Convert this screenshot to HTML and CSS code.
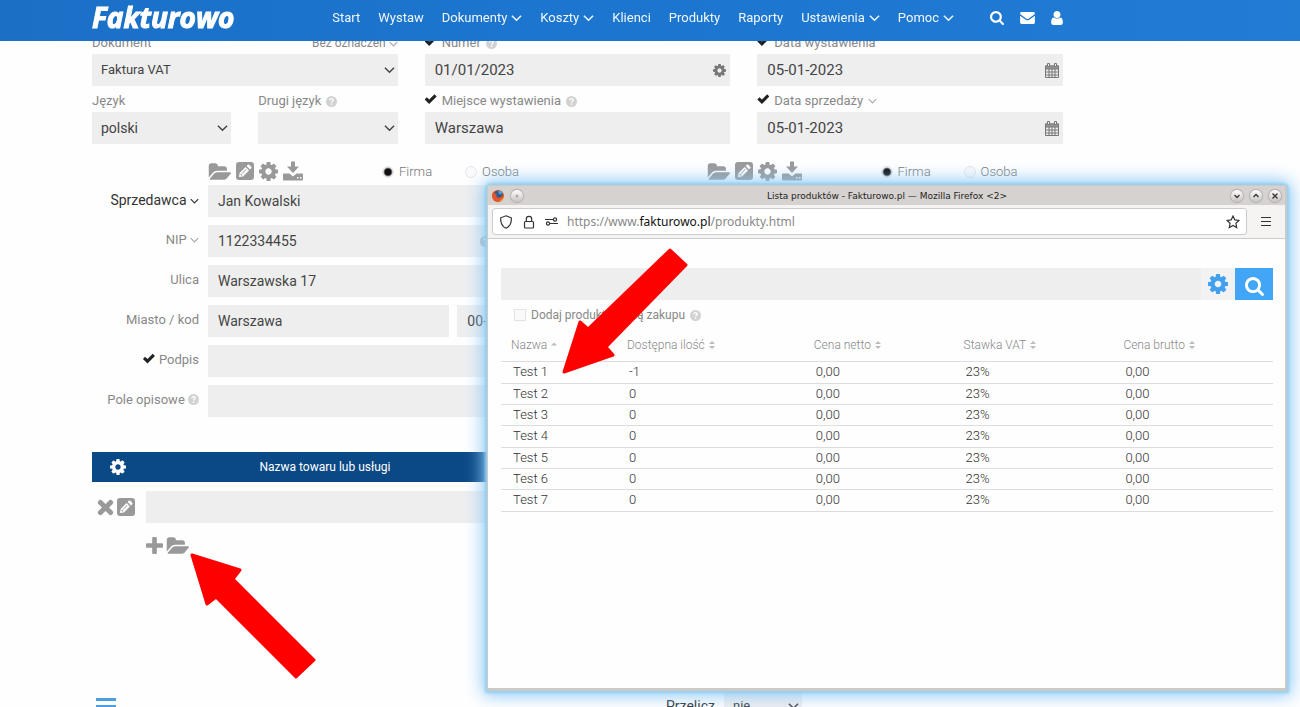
FILE: index.html
```html
<!DOCTYPE html>
<html lang="pl">
<head>
<meta charset="utf-8">
<title>Fakturowo</title>
<link rel="stylesheet" href="styles.css">
</head>
<body>
<svg class="sprite" aria-hidden="true">
  <symbol id="cog" viewBox="128 128 1536 1536"><path d="M1152 896q0-106-75-181t-181-75-181 75-75 181 75 181 181 75 181-75 75-181zm512-109v222q0 12-8 23t-20 13l-185 28q-19 54-39 91 35 50 107 138 10 12 10 25t-9 23q-27 37-99 108t-94 71q-12 0-26-9l-138-108q-44 23-91 38-16 136-29 186-7 28-36 28h-222q-14 0-24.500-8.500t-11.500-21.500l-28-184q-49-16-90-37l-141 107q-10 9-25 9-14 0-25-11-126-114-165-168-7-10-7-23 0-12 8-23 15-21 51-66.500t54-70.500q-27-50-41-99l-183-27q-13-2-21-12.500t-8-23.500v-222q0-12 8-23t19-13l186-28q14-46 39-92-40-57-107-138-10-12-10-24 0-10 9-23 26-36 98.500-107.500t94.500-71.500q13 0 26 10l138 107q44-23 91-38 16-136 29-186 7-28 36-28h222q14 0 24.500 8.500t11.500 21.500l28 184q49 16 90 37l142-107q9-9 24-9 13 0 25 10 129 119 165 170 7 8 7 22 0 12-8 23-15 21-51 66.500t-54 70.500q26 50 41 98l183 28q13 2 21 12.500t8 23.500z"/></symbol>
  <symbol id="folder" viewBox="0 128 1943 1408"><path d="M1943 952q0 31-31 66l-336 396q-43 51-120.500 86.500t-143.500 35.500h-1088q-34 0-60.500-13t-26.500-43q0-31 31-66l336-396q43-51 120.500-86.500t143.500-35.500h1088q34 0 60.500 13t26.500 43zm-343-344v160h-832q-94 0-197 47.500t-164 119.500l-337 396-5 6q0-4-.5-12.500t-.5-12.500v-960q0-92 66-158t158-66h320q92 0 158 66t66 158v32h544q92 0 158 66t66 158z"/></symbol>
  <symbol id="search" viewBox="64 128 1664 1664"><path d="M1216 832q0-185-131.500-316.500t-316.500-131.500-316.500 131.500-131.500 316.500 131.500 316.500 316.500 131.500 316.500-131.500 131.500-316.500zm512 832q0 52-38 90t-90 38q-54 0-90-38l-343-342q-179 124-399 124-143 0-273.500-55.500t-225-150-150-225-55.500-273.500 55.500-273.500 150-225 225-150 273.500-55.500 273.500 55.500 225 150 150 225 55.500 273.500q0 220-124 399l343 343q37 37 37 90z"/></symbol>
  <symbol id="mail" viewBox="0 0 16 13"><path d="M0 2.200v-.7C0 .7.700 0 1.500 0h13c.8 0 1.500.7 1.500 1.500v.7L9.200 7.200c-.8.500-1.600.5-2.400 0z M0 4l6 4.300c1.300.9 2.700.9 4 0L16 4v7.500c0 .8-.7 1.500-1.500 1.500h-13C.700 13 0 12.300 0 11.500z"/></symbol>
  <symbol id="user" viewBox="256 128 1280 1536"><path d="M1536 1399q0 109-62.500 187t-150.500 78h-854q-88 0-150.500-78t-62.500-187q0-85 8.500-160.500t31.500-152 58.500-131 94-89 134.500-34.500q131 128 313 128t313-128q76 0 134.500 34.500t94 89 58.500 131 31.500 152 8.500 160.500zm-256-887q0 159-112.500 271.500t-271.500 112.500-271.500-112.500-112.500-271.500 112.500-271.500 271.500-112.500 271.500 112.500 112.500 271.500z"/></symbol>
  <symbol id="pencil" viewBox="0 0 18 18"><path fill-rule="evenodd" d="M3 0h12a3 3 0 0 1 3 3v12a3 3 0 0 1-3 3H3a3 3 0 0 1-3-3V3a3 3 0 0 1 3-3zM3 15l4-.6L13 8.400 9.600 5 3.600 11zM10.600 4l3.400 3.400 1.200-1.200c.5-.5.5-1 0-1.500l-1.900-1.900c-.5-.5-1-.5-1.500 0zM5 11.500l1.500 1.500-.9.700-1.200-1.200zM6 11l4-4 .5.500-4 4z"/></symbol>
  <symbol id="download" viewBox="0 0 20 19"><path fill-rule="evenodd" d="M8 0h4v5h4l-6 6.500L4 5h4zM1 12h5.500L10 15l3.500-3H19c.6 0 1 .4 1 1v5c0 .6-.4 1-1 1H1c-.6 0-1-.4-1-1v-5c0-.6.400-1 1-1zM14 15.500V17h1.500v-1.500zM17 15.500V17h1.500v-1.500z"/></symbol>
  <symbol id="plus" viewBox="192 128 1408 1408"><path d="M1600 736v192q0 40-28 68t-68 28h-416v416q0 40-28 68t-68 28h-192q-40 0-68-28t-28-68v-416h-416q-40 0-68-28t-28-68v-192q0-40 28-68t68-28h416v-416q0-40 28-68t68-28h192q40 0 68 28t28 68v416h416q40 0 68 28t28 68z"/></symbol>
  <symbol id="cross" viewBox="0 0 15 15"><path d="M3 3l9 9M12 3l-9 9" stroke="currentColor" stroke-width="4.400" stroke-linecap="round"/></symbol>
  <symbol id="calendar" viewBox="0 0 14 15"><path d="M.5 3h13v11.500H.5zM.5 6h13M.5 9h13M.5 12h13M4 6v8.500M7 6v8.500M10 6v8.500" fill="none" stroke="currentColor"/><path d="M0 2.500h14V6H0z" opacity=".75"/><path d="M2.500.5h2v3h-2zM9.500.5h2v3h-2z" fill="#eee" stroke="currentColor"/></symbol>
  <symbol id="chevron" viewBox="0 0 12 8"><path d="M1 1.500l5 5 5-5" fill="none" stroke="currentColor" stroke-width="1.600"/></symbol>
  <symbol id="help" viewBox="0 0 12 12"><circle cx="6" cy="6" r="6"/><path d="M4.200 4.600C4.300 2.300 7.900 2.400 7.800 4.600 7.700 5.700 6.100 5.800 6.100 7.200M6.100 8.300v1.500" fill="none" stroke="#fff" stroke-width="1.500"/></symbol>
  <symbol id="sort" viewBox="0 0 6 8"><path d="M0 3l3-3 3 3zM0 5h6L3 8z"/></symbol>
  <symbol id="sortup" viewBox="0 0 6 8"><path d="M0 4.500l3-3 3 3z"/></symbol>
</svg>

<header class="topbar">
  <a class="logo" href="#">Fakturowo</a>
  <nav class="nav">
    <a href="#">Start</a>
    <a href="#">Wystaw</a>
    <a href="#">Dokumenty <svg class="chev"><use href="#chevron"/></svg></a>
    <a href="#">Koszty <svg class="chev"><use href="#chevron"/></svg></a>
    <a href="#">Klienci</a>
    <a href="#">Produkty</a>
    <a href="#">Raporty</a>
    <a href="#">Ustawienia <svg class="chev"><use href="#chevron"/></svg></a>
    <a href="#">Pomoc <svg class="chev"><use href="#chevron"/></svg></a>
  </nav>
  <div class="tools">
    <a href="#" aria-label="Szukaj"><svg class="i14"><use href="#search"/></svg></a>
    <a href="#" aria-label="Wiadomości"><svg class="mail"><use href="#mail"/></svg></a>
    <a href="#" aria-label="Konto"><svg class="user"><use href="#user"/></svg></a>
  </div>
</header>

<main class="page">
  <section class="doc">
    <div class="field">
      <div class="lab"><label for="dokument">Dokument</label><a class="small" href="#">Bez oznaczeń <svg class="chev thin"><use href="#chevron"/></svg></a></div>
      <div class="sel tight"><select id="dokument"><option>Faktura VAT</option></select><svg class="chev"><use href="#chevron"/></svg></div>
    </div>
    <div class="field">
      <div class="lab"><input type="checkbox" class="tick" id="t1" checked><label for="t1">Numer</label><svg class="help"><use href="#help"/></svg></div>
      <div class="box"><input type="text" aria-label="Numer" value="01/01/2023"><svg class="i13"><use href="#cog"/></svg></div>
    </div>
    <div class="field">
      <div class="lab"><input type="checkbox" class="tick" id="t2" checked><label for="t2">Data wystawienia</label></div>
      <div class="box"><input type="text" aria-label="Data wystawienia" value="05-01-2023"><svg class="cal"><use href="#calendar"/></svg></div>
    </div>
    <div class="pair">
      <div class="field">
        <div class="lab"><label for="jezyk">Język</label></div>
        <div class="sel"><select id="jezyk"><option>polski</option></select><svg class="chev"><use href="#chevron"/></svg></div>
      </div>
      <div class="field">
        <div class="lab"><label for="jezyk2">Drugi język</label><svg class="help"><use href="#help"/></svg></div>
        <div class="sel"><select id="jezyk2"><option></option></select><svg class="chev"><use href="#chevron"/></svg></div>
      </div>
    </div>
    <div class="field">
      <div class="lab"><input type="checkbox" class="tick" id="t3" checked><label for="t3">Miejsce wystawienia</label><svg class="help"><use href="#help"/></svg></div>
      <div class="box"><input type="text" aria-label="Miejsce wystawienia" value="Warszawa"></div>
    </div>
    <div class="field">
      <div class="lab"><input type="checkbox" class="tick" id="t4" checked><label for="t4">Data sprzedaży</label><svg class="chev thin"><use href="#chevron"/></svg></div>
      <div class="box"><input type="text" aria-label="Data sprzedaży" value="05-01-2023"><svg class="cal"><use href="#calendar"/></svg></div>
    </div>
  </section>

  <section class="parties">
    <div class="party">
      <div class="ptools">
        <button aria-label="Otwórz"><svg class="folder"><use href="#folder"/></svg></button>
        <button aria-label="Edytuj"><svg class="i18"><use href="#pencil"/></svg></button>
        <button aria-label="Ustawienia"><svg class="i19"><use href="#cog"/></svg></button>
        <button aria-label="Pobierz"><svg class="i20"><use href="#download"/></svg></button>
        <label class="kind first"><input type="radio" name="s" checked>Firma</label>
        <label class="kind"><input type="radio" name="s">Osoba</label>
      </div>
      <label class="dark" for="s1">Sprzedawca <svg class="chev mini"><use href="#chevron"/></svg></label>
      <div class="box"><input type="text" id="s1" value="Jan Kowalski"></div>
      <label for="s2">NIP <svg class="chev thin"><use href="#chevron"/></svg></label>
      <div class="box short"><input type="text" id="s2" value="1122334455"><svg class="help"><use href="#help"/></svg></div>
      <label for="s3">Ulica</label>
      <div class="box"><input type="text" id="s3" value="Warszawska 17"></div>
      <label for="s4">Miasto / kod</label>
      <div class="city">
        <div class="box"><input type="text" id="s4" value="Warszawa"></div>
        <div class="box"><input type="text" aria-label="Kod" value="00-"></div>
      </div>
      <label for="t5"><input type="checkbox" class="tick" id="t5" checked>Podpis</label>
      <div class="box"><input type="text" aria-label="Podpis"></div>
      <label for="s6">Pole opisowe <svg class="help"><use href="#help"/></svg></label>
      <div class="box"><input type="text" id="s6"></div>
    </div>
    <div class="party">
      <div class="ptools">
        <button aria-label="Otwórz"><svg class="folder"><use href="#folder"/></svg></button>
        <button aria-label="Edytuj"><svg class="i18"><use href="#pencil"/></svg></button>
        <button aria-label="Ustawienia"><svg class="i19"><use href="#cog"/></svg></button>
        <button aria-label="Pobierz"><svg class="i20"><use href="#download"/></svg></button>
        <label class="kind first"><input type="radio" name="b" checked>Firma</label>
        <label class="kind"><input type="radio" name="b">Osoba</label>
      </div>
    </div>
  </section>

  <section class="items">
    <div class="ihead">
      <button aria-label="Kolumny"><svg class="i16"><use href="#cog"/></svg></button>
      <span>Nazwa towaru lub usługi</span>
    </div>
    <div class="irow">
      <div class="iact">
        <button aria-label="Usuń"><svg class="i17"><use href="#cross"/></svg></button>
        <button aria-label="Edytuj"><svg class="i18"><use href="#pencil"/></svg></button>
      </div>
      <div class="box"><input type="text" aria-label="Nazwa towaru lub usługi"></div>
    </div>
    <div class="iadd">
      <button aria-label="Dodaj"><svg class="i17"><use href="#plus"/></svg></button>
      <button aria-label="Lista produktów"><svg class="folder"><use href="#folder"/></svg></button>
    </div>
  </section>

  <section class="bottom">
    <button class="burger" aria-label="Menu"><i></i><i></i><i></i></button>
    <label for="przelicz">Przelicz</label>
    <div class="sel tight"><select id="przelicz"><option>nie</option></select><svg class="chev"><use href="#chevron"/></svg></div>
  </section>
</main>

<section class="window" aria-label="Lista produktów">
  <div class="title">
    <svg class="fox" viewBox="0 0 12 12"><circle cx="6" cy="6" r="6" fill="#d9491e"/><circle cx="6.200" cy="5" r="4.300" fill="#2c5a94"/><path d="M6 1.500c2-1 4-.5 5 1.500-1-.3-1.500.5-2 1.500l-2-.5z" fill="#4fa3d1"/><path d="M.5 3C1 2 1.600 1.500 2.300 1.500L2.600 3.400 5 4 4 5.600 5.200 7.200C7.500 8.600 9.500 7 10.500 5 11 9 9 11.600 6 11.700 2 11.500-.7 7.500.5 3z" fill="#e4572e"/><path d="M8 10.500c2-.8 3.400-2.700 3.500-5 .8 3-.7 5.400-3.500 6z" fill="#f5a623"/></svg>
    <button class="orb" aria-label="Przypnij"><svg class="dot" viewBox="0 0 12 12"><circle cx="6" cy="6" r="1"/></svg></button>
    <h1>Lista produktów - Fakturowo.pl — Mozilla Firefox &lt;2&gt;</h1>
    <button class="orb" aria-label="Minimalizuj"><svg viewBox="0 0 12 12"><path d="M3.500 5L6 7.500 8.500 5"/></svg></button>
    <button class="orb" aria-label="Maksymalizuj"><svg viewBox="0 0 12 12"><path d="M3.500 7L6 4.500 8.500 7"/></svg></button>
    <button class="orb" aria-label="Zamknij"><svg viewBox="0 0 12 12"><path d="M3.500 3.500l5 5M8.500 3.500l-5 5"/></svg></button>
  </div>
  <div class="urlbar">
    <div class="url">
      <svg class="shield" viewBox="0 0 14 14"><path d="M7 .8l5.300 2c.3 5-1 8.500-5.300 10.500C2.700 11.300 1.400 7.800 1.700 2.800z"/></svg>
      <svg class="lock" viewBox="0 0 12 14"><rect x="1.500" y="6.500" width="9" height="6.500" rx="1"/><path d="M3.300 6.500V4a2.700 2.700 0 0 1 5.400 0v2.500"/></svg>
      <svg class="perm" viewBox="0 0 13 9"><path d="M0 2.500h8M5 6.500h8"/><circle cx="10" cy="2.500" r="1.600"/><circle cx="3" cy="6.500" r="1.600"/></svg>
      <span>https://www.<b>fakturowo.pl</b>/produkty.html</span>
      <svg class="star" viewBox="0 0 14 14"><path d="M7 1l1.800 3.900 4.200.5-3.100 2.900.8 4.200L7 10.400l-3.700 2.100.8-4.200L1 5.400l4.200-.5z"/></svg>
    </div>
    <button class="menu" aria-label="Menu"><i></i><i></i><i></i></button>
  </div>
  <div class="view">
    <form class="find">
      <input type="text" aria-label="Szukaj produktu">
      <button type="button" class="conf" aria-label="Ustawienia"><svg class="i20"><use href="#cog"/></svg></button>
      <button type="button" class="go" aria-label="Szukaj"><svg class="i19"><use href="#search"/></svg></button>
    </form>
    <div class="opt"><input type="checkbox" id="cena"><label for="cena">Dodaj produkt z ceną zakupu</label><svg class="help"><use href="#help"/></svg></div>
    <table>
      <thead><tr>
        <th class="c1">Nazwa <svg><use href="#sortup"/></svg></th>
        <th class="c2">Dostępna ilość <svg><use href="#sort"/></svg></th>
        <th class="c3">Cena netto <svg><use href="#sort"/></svg></th>
        <th class="c4">Stawka VAT <svg><use href="#sort"/></svg></th>
        <th class="c5">Cena brutto <svg><use href="#sort"/></svg></th>
      </tr></thead>
      <tbody>
        <tr><td>Test 1</td><td>-1</td><td>0,00</td><td>23%</td><td>0,00</td></tr>
        <tr><td>Test 2</td><td>0</td><td>0,00</td><td>23%</td><td>0,00</td></tr>
        <tr><td>Test 3</td><td>0</td><td>0,00</td><td>23%</td><td>0,00</td></tr>
        <tr><td>Test 4</td><td>0</td><td>0,00</td><td>23%</td><td>0,00</td></tr>
        <tr><td>Test 5</td><td>0</td><td>0,00</td><td>23%</td><td>0,00</td></tr>
        <tr><td>Test 6</td><td>0</td><td>0,00</td><td>23%</td><td>0,00</td></tr>
        <tr><td>Test 7</td><td>0</td><td>0,00</td><td>23%</td><td>0,00</td></tr>
      </tbody>
    </table>
  </div>
</section>

<svg class="arrow to-row" viewBox="0 0 126 126"><path d="M2 124L18 74l8 7L108 2l16 15-80 82 7 8z"/></svg>
<svg class="arrow to-folder" viewBox="0 0 126 126"><path d="M2 2l48 15-7 9 81 81-18 17-80-80-9 7z"/></svg>
</body>
</html>
```
FILE: styles.css
```css
* { box-sizing: border-box; }
body { margin: 0; height: 100vh; overflow: hidden; background: #fefefe; color: #333; font: 13px/20px Roboto, sans-serif; }
a { color: inherit; text-decoration: none; }
button { padding: 0; border: 0; background: none; color: inherit; font: inherit; display: flex; align-items: center; justify-content: center; }
input, select { font: inherit; color: inherit; margin: 0; }
svg { fill: currentColor; flex: none; }
.sprite { position: absolute; width: 0; height: 0; }
.i13 { width: 13px; height: 13px; }
.i14 { width: 14px; height: 14px; }
.i16 { width: 16px; height: 16px; }
.i17 { width: 17px; height: 17px; }
.i18 { width: 18px; height: 18px; }
.i19 { width: 19px; height: 19px; }
.i20 { width: 20px; height: 20px; }
.folder { width: 23px; height: 17px; }
.mail { width: 15px; height: 12px; }
.user { width: 12px; height: 14px; }
.cal { width: 14px; height: 15px; }
.chev { width: 11px; height: 8px; }
.chev.thin, .chev.mini { width: 9px; height: 6px; }
.chev.thin { color: #aaa; }
.help { width: 11px; height: 11px; color: #d2d2d2; }

.topbar { position: fixed; inset: 0 0 auto 0; z-index: 2; height: 41px; padding: 0 237px 6px 92px; display: flex; align-items: center; color: #f1f7fd; background: linear-gradient(90deg, #1b70c6, #1c76d0 50%, #227cd4); }
.logo { font: italic 700 28px/32px "Open Sans", sans-serif; color: #fff; -webkit-text-stroke: 1px #fff; margin-right: auto; padding-bottom: 2px; }
.nav { display: flex; gap: 18px; }
.nav a { display: flex; align-items: center; gap: 4px; }
.tools { display: flex; gap: 16px; margin-left: 36px; color: #fff; }
.tools a { display: flex; align-items: center; }

.page { padding: 34px 237px 0 92px; }
.doc { display: grid; grid-template-columns: repeat(3, 1fr); gap: 6px 27px; }
.pair { display: grid; grid-template-columns: 1fr 1fr; gap: 27px; }
.lab { display: flex; align-items: center; gap: 5px; height: 20px; padding-bottom: 2px; color: #888; }
.lab .small { margin-left: auto; font-size: 12px; }
.tick { appearance: none; width: 12px; height: 12px; background: #222; clip-path: polygon(0 50%, 18% 32%, 38% 50%, 82% 6%, 100% 24%, 38% 88%); }
.lab .tick { margin-bottom: 3px; }
.sel, .box { position: relative; height: 32px; background: #eee; display: flex; align-items: center; font-size: 14px; color: #444; }
.sel select, .box input { appearance: none; border: 0; outline: 0; background: none; width: 100%; height: 100%; padding: 0 10px; line-height: 20px; }
.doc .box input { font-size: 15px; }
.sel select { padding: 0 9px; }
.sel.tight select { font-size: 13px; }
.sel svg { position: absolute; right: 3px; }
.box svg { position: absolute; right: 4px; color: #777; }

.parties { display: grid; grid-template-columns: 1fr 1fr; gap: 26px; margin-top: 17px; }
.party { display: grid; grid-template-columns: 107px 1fr; gap: 8px 9px; align-content: start; align-items: center; }
.party > label { text-align: right; color: #888; padding-bottom: 2px; white-space: nowrap; }
.party > label.dark { color: #333; font-size: 14px; }
.party > label .tick { vertical-align: -1px; margin-right: 4px; }
.party > label .chev { vertical-align: 1px; }
.party > label .help { vertical-align: -1px; }
.box.short { width: 80%; }
.box .help { right: 2px; color: #bbb; }
.ptools { grid-column: 2; display: flex; align-items: center; gap: 5px; height: 20px; margin-bottom: -4px; color: #999; }
.kind { display: flex; align-items: center; gap: 5px; font-weight: 300; font-size: 13px; color: #777; padding-top: 2px; }
.kind.first { margin: 0 28px 0 74px; }
.kind input { appearance: none; width: 12px; height: 12px; border-radius: 50%; border: 1px solid #e6e6e6; background: #fafafa; }
.kind input:checked { background: radial-gradient(circle, #111 0 3px, #fafafa 5px); }
.city { display: grid; grid-template-columns: 241fr 107fr; gap: 8px; }

.items { margin-top: 35px; }
.ihead { height: 30px; display: grid; grid-template-columns: 51px 364px; align-items: center; background: #0a4985; color: #fff; font-size: 12px; text-align: center; }
.irow { display: grid; grid-template-columns: 54px 1fr; align-items: center; margin-top: 9px; }
.iact, .iadd { display: flex; align-items: center; gap: 3px; color: #999; }
.iact { padding-left: 5px; }
.iadd { margin: 14px 0 0 54px; }

.bottom { display: flex; align-items: start; margin-top: 137px; }
.burger, .menu { flex-direction: column; }
.burger { width: 20px; gap: 4px; margin: 7px 550px 0 4px; color: #4a9fe0; }
.burger i { width: 20px; height: 3px; background: currentColor; }
.bottom label { width: 58px; margin-top: 5px; font-size: 14px; }
.bottom .sel { width: 78px; height: 30px; }

.window { position: absolute; inset: 185px 13px 16px 487px; z-index: 3; border: 1px solid #cdc9c6; border-width: 1px 2px 3px 1px; border-radius: 4px 4px 0 0; background: #fefefe; box-shadow: 0 0 3px 2px #8fd0f0, 0 0 18px 4px #8cc8f8; }
.title { height: 19px; padding: 0 4px; display: flex; align-items: center; gap: 7px; background: #d6d2cf; }
.title h1 { flex: 1; margin: 0; padding-left: 20px; font: 9px/18px "DejaVu Sans", sans-serif; color: #222; text-align: center; }
.fox { width: 12px; height: 12px; }
.orb { width: 12px; height: 12px; border-radius: 50%; background: linear-gradient(#fff, #c6c2bf); box-shadow: 0 0 1px 1px #b0aca9; }
.orb svg { width: 12px; height: 12px; fill: none; stroke: #333; stroke-width: 1.3; }
.orb svg.dot { stroke: #999; stroke-width: 1; }
.urlbar { display: flex; align-items: center; height: 34px; padding-left: 4px; background: #f5f4f2; border-bottom: 1px solid #ccc; }
.url { flex: 1; height: 27px; display: flex; align-items: center; gap: 9px; padding: 0 6px; background: #fff; border: 1px solid #ccc; border-radius: 3px; font: 12px/20px "Noto Sans", sans-serif; color: #888; }
.url svg { fill: none; stroke: #333; stroke-width: 1.2; }
.url b { font-weight: 400; color: #111; }
.shield, .lock, .star { width: 14px; height: 14px; }
.perm { width: 13px; height: 9px; }
.url .star { margin-left: auto; }
.menu { width: 38px; gap: 2px; }
.menu i { width: 10px; height: 1px; background: #333; }
.menu i + i { margin-top: 1px; }

.view { padding: 29px 12px 0 13px; font-weight: 300; font-size: 12px; }
.find { display: flex; height: 32px; }
.find input { flex: 1; min-width: 0; border: 0; outline: 0; background: #eee; padding: 0 10px; }
.conf { width: 34px; background: #f2f2f2; color: #42a0f0; }
.go { width: 38px; background: #42a5f5; color: #fff; padding: 4px 0 0; }
.opt { display: flex; align-items: center; gap: 5px; padding: 5px 13px; font-weight: 400; color: #888; }
.opt input { appearance: none; width: 12px; height: 12px; border: 1px solid #e2e2e2; background: #fafafa; }
table { width: 100%; border-collapse: collapse; table-layout: fixed; }
th, td { text-align: left; padding: 0; border-bottom: 1px solid #ddd; }
th { height: 31px; padding-left: 10px; font-weight: 300; color: #888; white-space: nowrap; }
th svg { width: 6px; height: 8px; margin-left: 1px; color: #bbb; }
td { height: 21px; padding-left: 12px; font-size: 13px; line-height: 18px; color: #333; }
tbody tr:nth-child(3n+1) td { height: 22px; }
.c1 { width: 116px; }
.c2 { width: 24.2%; }
.c3 { width: 19.4%; }
.c4 { width: 20.7%; }

.arrow { position: absolute; z-index: 4; width: 126px; height: 126px; fill: #f00; stroke: #f00; stroke-width: 3; stroke-linejoin: round; }
.to-row { left: 562px; top: 248px; }
.to-folder { left: 190px; top: 553px; }
```
